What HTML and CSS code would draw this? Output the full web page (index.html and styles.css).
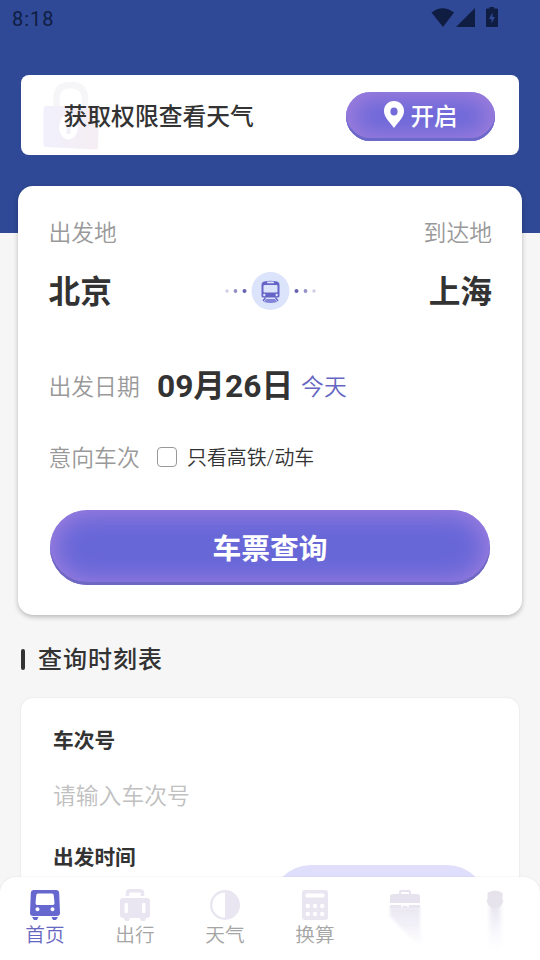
FILE: index.html
```html
<!DOCTYPE html>
<html lang="zh-CN">
<head>
<meta charset="utf-8">
<title>车票查询</title>
<link rel="stylesheet" href="styles.css">
</head>
<body>
<div class="app">
  <header class="hero">
    <div class="status">
      <span class="clock">8:18</span>
      <svg class="status-icons" width="68" height="22" viewBox="0 0 68 22">
        <path d="M0.5 4.500Q11.500 -4 23 4.500L12 19Z"/>
        <path d="M25 19L44 0V19Z"/>
        <path fill-rule="evenodd" d="M58.500 -1h4.500v1.500h3q1 0 1 1V18q0 1-1 1H56q-1 0-1-1V1.500q0-1 1-1h2.500zM61.500 4.500L58 11h2.500v4.500l3.500-6.500h-2.500z"/>
      </svg>
    </div>
    <section class="permit">
      <svg class="lock" width="58" height="72" viewBox="0 0 58 72">
        <defs><linearGradient id="lockFill" x1="0" y1="0" x2="1" y2="0"><stop offset="0" stop-color="#f1f0fc"/><stop offset="1" stop-color="#f5eef3"/></linearGradient></defs>
        <path d="M14.500 36V21Q14.500 7 28.500 7Q43 7 43 21V36" fill="none" stroke="#f6f6f8" stroke-width="6.500"/>
        <path d="M4 28H54Q57 28 57 31L56 69Q56 72 53 71.500L4 69Q1.500 69 1.500 66V31Q1.500 28 4 28Z" fill="url(#lockFill)"/>
        <ellipse cx="26.500" cy="49" rx="9.500" ry="12.500" fill="#fff"/>
        <path d="M23.500 45q3-3 6 0v4l-1 1v6h-4v-6l-1-1z" fill="#f2eff7"/>
      </svg>
      <span class="permit-text">获取权限查看天气</span>
      <div class="open-btn">
        <svg width="20" height="27" viewBox="0 0 20 27"><path fill="#fff" fill-rule="evenodd" d="M10 0C4 0 0 4.500 0 10C0 16 5 20 10 27C15 20 20 16 20 10C20 4.500 16 0 10 0ZM10 6.500a3.600 4 0 1 1 0 8a3.600 4 0 1 1 0-8Z"/></svg>
        <span>开启</span>
      </div>
    </section>
  </header>

  <section class="ticket">
    <div class="row labels"><span>出发地</span><span>到达地</span></div>
    <div class="row cities">
      <strong>北京</strong>
      <svg width="92" height="40" viewBox="0 0 92 40">
        <g fill="#6661b0"><circle cx="3" cy="20" r="1.700" opacity=".3"/><circle cx="11.500" cy="20" r="1.900" opacity=".7"/><circle cx="20.500" cy="20" r="2"/><circle cx="72.500" cy="20" r="2"/><circle cx="81.500" cy="20" r="1.900" opacity=".7"/><circle cx="90" cy="20" r="1.700" opacity=".3"/></g>
        <circle cx="46.500" cy="20" r="19" fill="#dce4fb"/>
        <path fill="#6665c7" fill-rule="evenodd" d="M40 10.500Q46.500 9 53 10.500Q55.500 11 55.500 14V25Q55.500 26.500 53.500 26.500H39.500Q37.500 26.500 37.500 25V14Q37.500 11 40 10.500ZM40.500 14Q39.500 14 39.500 15V20.500Q39.500 21.500 40.500 21.500H52.500Q53.500 21.500 53.500 20.500V15Q53.500 14 52.500 14Z"/>
        <rect x="43" y="10.500" width="7" height="1.800" rx=".9" fill="#dce4fb"/>
        <g fill="#dce4fb"><circle cx="40.300" cy="24" r="1.200"/><circle cx="52.700" cy="24" r="1.200"/></g>
        <path d="M41.500 26.500L39 30M51.500 26.500L54 30" stroke="#6665c7" stroke-width="1.300"/>
        <path d="M42 28H51L53 31Q46.500 33 40 31Z" fill="#8184d8"/>
      </svg>
      <strong>上海</strong>
    </div>
    <div class="row date"><span class="key">出发日期</span><strong>09月26日</strong><span class="today">今天</span></div>
    <div class="row prefer"><span class="key">意向车次</span><span class="box"></span><span class="opt">只看高铁/动车</span></div>
    <div class="query-btn">车票查询</div>
  </section>

  <h2 class="title"><span class="bar"></span><span class="title-text">查询时刻表</span></h2>

  <section class="schedule">
    <div class="field">车次号</div>
    <div class="hint">请输入车次号</div>
    <div class="field">出发时间</div>
    <div class="pill"></div>
  </section>

  <nav class="tabs">
    <div class="tab active">
      <svg width="32" height="32" viewBox="0 0 32 32"><path fill="#6667cf" fill-rule="evenodd" d="M5 1H27Q30 1 30.200 4L31 24Q31 27 28 27H4Q1 27 1 24L1.800 4Q2 1 5 1ZM9 4.500Q7.500 4.500 7.300 6L6.500 14Q6.500 16 8 16H24Q25.500 16 25.500 14L24.700 6Q24.500 4.500 23 4.500ZM8.500 18.300a2 2 0 1 0 .01 0ZM23.500 18.300a2 2 0 1 0 .01 0Z"/><path fill="#6667cf" d="M3 28h6.500l-1.500 3H5zM22.500 28H29l-2 3h-3z"/></svg>
      <span>首页</span>
    </div>
    <div class="tab">
      <svg width="32" height="32" viewBox="0 0 32 32"><path d="M8.500 7V4Q8.500 1.800 11 1.800H21Q23.500 1.800 23.500 4V7" fill="none" stroke="#e9e6f1" stroke-width="3.500"/><path fill="#e9e6f1" fill-rule="evenodd" d="M4 9H28Q31 9 31 12V26Q31 29 28 29H27L26 32H22L21 29H11L10 32H6L5 29H4Q1 29 1 26V12Q1 9 4 9ZM6.500 14Q5.500 14 5.500 15V23Q5.500 24 6.500 24H8Q9 24 9 23V15Q9 14 8 14ZM24 14Q23 14 23 15V23Q23 24 24 24H25.500Q26.500 24 26.500 23V15Q26.500 14 25.500 14Z"/></svg>
      <span>出行</span>
    </div>
    <div class="tab">
      <svg width="32" height="32" viewBox="0 0 32 32"><circle cx="16" cy="16" r="13.800" fill="none" stroke="#e9e6f1" stroke-width="2.400"/><path d="M16 2a14 14 0 0 1 0 28z" fill="#e9e6f1"/></svg>
      <span>天气</span>
    </div>
    <div class="tab">
      <svg width="32" height="32" viewBox="0 0 32 32"><rect x="3" y="1" width="26" height="30" rx="3" fill="#e9e6f1"/><rect x="6.500" y="4.500" width="19" height="4" rx="1.500" fill="#fff"/><g fill="#fff"><circle cx="8.800" cy="17" r="2.200"/><circle cx="16" cy="17" r="2.200"/><circle cx="23.200" cy="17" r="2.200"/><circle cx="8.800" cy="25" r="2.200"/><circle cx="16" cy="25" r="2.200"/><circle cx="23.200" cy="25" r="2.200"/></g></svg>
      <span>换算</span>
    </div>
    <div class="tab">
      <svg width="60" height="66" viewBox="0 0 60 66">
        <defs><linearGradient id="fadeA" x1="0" y1="0" x2="0" y2="1"><stop offset="0" stop-color="#e9e6f1"/><stop offset=".45" stop-color="#f3f1f8"/><stop offset="1" stop-color="#fff"/></linearGradient><filter id="softA"><feGaussianBlur stdDeviation="1.500"/></filter></defs>
        <path d="M25 6V3Q25 2 26 2H34Q35 2 35 3V6" fill="none" stroke="#e6e3ee" stroke-width="2"/>
        <path d="M18 5H42Q45 5 45 8V14H15V8Q15 5 18 5Z" fill="#e6e3ee"/>
        <path d="M15 18H45V36L47 58L36 49L24 37L15 27Z" fill="url(#fadeA)" filter="url(#softA)"/>
        <path d="M15 16H26V19H28V17H32V19H34V16H45V19H15Z" fill="#e8e5f0"/>
      </svg>
    </div>
    <div class="tab">
      <svg width="60" height="66" viewBox="0 0 60 66">
        <defs><linearGradient id="fadeB" x1="0" y1="0" x2="0" y2="1"><stop offset="0" stop-color="#e5e2ec"/><stop offset=".5" stop-color="#f5f4fb"/><stop offset="1" stop-color="#fff"/></linearGradient><filter id="softB" x="-.5" width="2"><feGaussianBlur stdDeviation="2"/></filter></defs>
        <path d="M25 15H35L37 60H24Z" fill="url(#fadeB)" filter="url(#softB)"/>
        <path d="M24 3Q30 0 36 3L37.500 4V11L38.500 12L36 17Q30 21 24 17L21.500 12L22.500 10V4Z" fill="#e6e3ec"/>
      </svg>
    </div>
  </nav>
</div>
</body>
</html>
```
FILE: styles.css
```css
* { box-sizing: border-box; }
body {
  margin: 0;
  font-family: Roboto, "Noto Sans CJK SC", sans-serif;
  color: #333;
  background: #f6f6f6;
}
.app {
  width: 540px;
  height: 960px;
  overflow: hidden;
  position: relative;
  display: flex;
  flex-direction: column;
}
.app > * { flex-shrink: 0; }
.hero { height: 233px; background: #2f4996; padding: 0 21px; }
.status {
  height: 75px;
  margin: 0 20px 0 -9px;
  padding-top: 8px;
  display: flex;
  justify-content: space-between;
  align-items: flex-start;
}
.clock { font-size: 20px; line-height: 22px; color: #101d42; letter-spacing: 1px; }
.status-icons { fill: #101d42; overflow: visible; }
.permit {
  height: 80px;
  border-radius: 8px;
  background: #fff;
  display: flex;
  align-items: center;
  justify-content: space-between;
  padding: 0 24px 0 42.500px;
  position: relative;
}
.lock { position: absolute; left: 21px; top: 3px; }
.permit-text { position: relative; font-size: 23.8px; font-weight: 500; line-height: 30px; padding-top: 3px; }
.open-btn {
  width: 149px;
  height: 49px;
  margin-top: 3px;
  border-radius: 25px;
  background: #6c68d9;
  box-shadow: inset 0 -3px 0 #6a68c9, inset 0 0 24px 6px #a27fdc;
  color: #fff;
  font-size: 23.5px;
  font-weight: 500;
  display: flex;
  align-items: center;
  justify-content: center;
  gap: 7px;
  padding-bottom: 4px;
}
.ticket {
  height: 429px;
  margin: -47px 18px 0;
  padding: 28px 30px 0 30.500px;
  background: #fff;
  border-radius: 15px;
  box-shadow: 0 2px 5px rgba(0, 0, 0, .25);
}
.row { display: flex; align-items: center; }
.labels { height: 34px; justify-content: space-between; font-size: 22.8px; font-weight: 350; color: #999; }
.cities { height: 40px; margin-top: 23px; justify-content: space-between; }
.cities svg { margin-right: 1px; }
.cities strong, .date strong { font-size: 31.7px; line-height: 40px; font-weight: 700; }
.cities strong { padding-top: 3px; }
.date { height: 40px; margin-top: 55px; }
.date strong { padding-top: 2px; }
.key { width: 108.500px; padding-bottom: 2px; font-size: 22.8px; font-weight: 350; color: #999; white-space: nowrap; }
.today { margin-left: 8px; padding-bottom: 2px; font-size: 22.8px; color: #6667c1; font-weight: 350; }
.prefer { height: 34px; margin-top: 34px; }
.box { width: 20px; height: 20px; border: 1.500px solid #999; border-radius: 4px; }
.opt { margin-left: 10px; padding-bottom: 2px; font-size: 19.9px; font-weight: 350; }
.query-btn {
  width: 440px;
  height: 75px;
  margin: 36px 0 0 1.500px;
  padding-top: 2px;
  border-radius: 38px;
  background: #6867d8;
  box-shadow: inset 0 -3px 0 #6e68c2, inset 0 0 26px 3px #a481e0;
  color: #fff;
  font-size: 28.8px;
  font-weight: 700;
  line-height: 75px;
  text-align: center;
}
.title {
  display: flex;
  align-items: center;
  gap: 13px;
  margin: 26px 0 0 21px;
  height: 36px;
  line-height: 34px;
  font-size: 24px;
  font-weight: 500;
  letter-spacing: 1px;
}
.title-text { padding-top: 2px; }
.bar { width: 4px; height: 21px; border-radius: 2px; background: #333; }
.schedule {
  height: 260px;
  margin: 21px 21px 0;
  padding: 27px 32px 0;
  background: #fff;
  border-radius: 12px;
  box-shadow: 0 0 2px rgba(0, 0, 0, .12);
}
.field { height: 32px; line-height: 32px; font-size: 20.7px; font-weight: 700; }
.hint { height: 34px; margin: 23px 0 28px; line-height: 34px; font-size: 22.8px; font-weight: 350; color: #c0c0c0; }
.pill { width: 216px; height: 80px; margin: -9px 0 0 218px; border-radius: 40px; background: #e0dffb; }
.tabs {
  position: absolute;
  left: 0;
  right: 0;
  bottom: 0;
  height: 83px;
  display: grid;
  grid-template-columns: repeat(6, 90px);
  background: #fff;
  border-radius: 16px 16px 0 0;
  box-shadow: 0 0 2px rgba(0, 0, 0, .1);
}
.tab {
  display: flex;
  flex-direction: column;
  align-items: center;
  padding-top: 12px;
  font-size: 19.7px;
  line-height: 26px;
  font-weight: 350;
  color: #a5a5a5;
}
.tab span { padding-top: 2px; }
.active { color: #6667c1; }
```
